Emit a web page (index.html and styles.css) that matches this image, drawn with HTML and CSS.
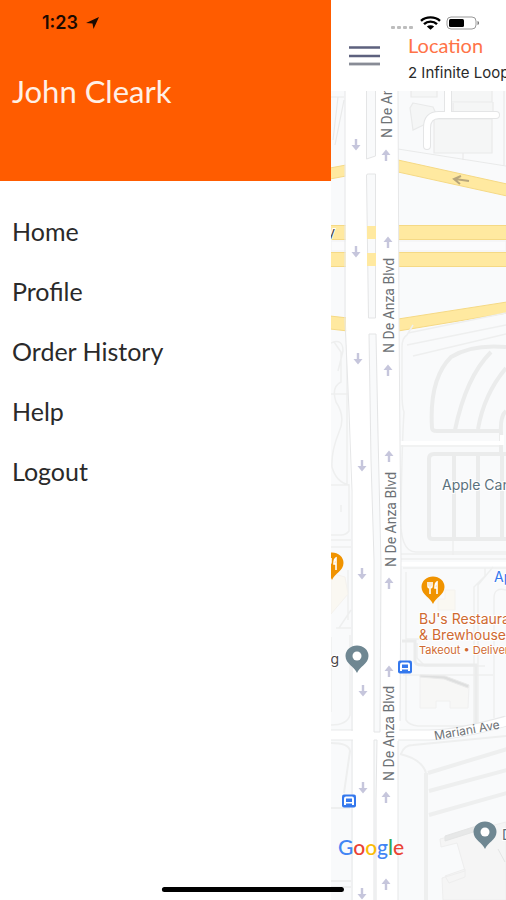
FILE: index.html
```html
<!DOCTYPE html>
<html lang="en">
<head>
<meta charset="utf-8">
<meta name="viewport" content="width=device-width, initial-scale=1">
<title>Menu</title>
<link rel="stylesheet" href="styles.css">
</head>
<body>
<div class="app">
  <aside class="drawer">
    <header class="profile">
      <div class="clock">
        <span>1:23</span>
        <svg width="13" height="12" viewBox="0 0 13 12" aria-hidden="true"><path d="M13 0 7.500 12 6.500 6.500 0 6Z"/></svg>
      </div>
      <h1 class="name">John Cleark</h1>
    </header>
    <nav class="menu">
      <a href="#home">Home</a>
      <a href="#profile">Profile</a>
      <a href="#orders">Order History</a>
      <a href="#help">Help</a>
      <a href="#logout">Logout</a>
    </nav>
  </aside>

  <main class="screen">
    <header class="topbar">
      <div class="status">
        <svg width="92" height="16" viewBox="0 0 92 16" aria-hidden="true">
          <g fill="#bdbdbd"><rect x="1" y="11" width="4" height="3" rx="1"/><rect x="7" y="11" width="4" height="3" rx="1"/><rect x="13" y="11" width="4" height="3" rx="1"/><rect x="19" y="11" width="4" height="3" rx="1"/></g>
          <g fill="none" stroke="#000" stroke-width="2.400"><path d="M31 5.800C36 1.200 45 1.200 50 5.800M34 9.200c3.500-3.500 9.500-3.500 13 0"/></g>
          <path d="M36.800 11.500c2.200-1.800 5.200-1.800 7.400 0l-3.700 3.200z"/>
          <rect x="57" y="2" width="29" height="12" rx="4" fill="#fff" stroke="#999"/>
          <rect x="59" y="4" width="15" height="8" rx="1.500"/>
          <path d="M87.500 6c2 .5 2 3.500 0 4z" fill="#777"/>
        </svg>
      </div>
      <div class="toolbar">
        <button class="burger" type="button" aria-label="Menu">
          <svg width="31" height="20" viewBox="0 0 31 20"><path d="M0 1.500h31M0 10h31" stroke="#5d617e" stroke-width="2.400"/><path d="M0 18h31" stroke="#888c96" stroke-width="2.800"/></svg>
        </button>
        <div class="place">
          <div class="place-title">Location</div>
          <div class="place-address">2 Infinite Loop</div>
        </div>
      </div>
    </header>

    <svg class="map" viewBox="331 91 175 809" preserveAspectRatio="xMinYMin slice" role="img" aria-label="Map">
      <defs>
        <path id="up" d="M-1.200 6V0H-4.500L0-5.500 4.500 0H1.200V6Z" fill="#c6c6dc"/>
        <path id="down" d="M-1.200-6V0H-4.500L0 5.500 4.500 0H1.200V-6Z" fill="#c6c6dc"/>
        <path id="pin" d="M0 15C-2 9-11.500 6-11.500-2a11.500 10.500 0 0 1 23 0C11.500 6 2 9 0 15Z"/>
        <g id="food"><use href="#pin" fill="#f09300"/><path d="M-5-7v4q0 2 2 2v6M-1-7v4q0 2-2 2M-3-7v5M4 5v-12q-2 1-2 6h2" fill="none" stroke="#fff" stroke-width="1.600"/></g>
        <g id="stop"><rect x="-7" y="-6.500" width="14" height="13" rx="2" fill="#3478ed"/><path d="M-5 4v-6.500q0-2 2-2h6q2 0 2 2v6.500z" fill="#fff"/><path d="M-3-2.500h6v3.500h-6zM-3 2.500h6v2h-6z" fill="#3478ed"/></g>
      </defs>

      <rect x="331" y="91" width="175" height="809" fill="#f9fafb"/>

      <!-- Buildings and paths north of the freeway -->
      <g fill="#f5f6f6" stroke="#e9eaea" stroke-width="1.200">
        <path d="M331 97h13M338 97l-5 43M344 100l-9 45" fill="none"/>
        <path d="M411 91v6h26v-6M413 103l20 4 5 11-25 12-3-22z"/>
        <path d="M450 91v11h42V91M453 103v9h40v-10"/>
        <path d="M434 119h58v34h-58z"/>
        <path d="M398 149 506 166M463 153v7M504 91v75" fill="none"/>
      </g>
      <path d="M427 146v-18q0-13 12-13h57M448 91v24" fill="none" stroke="#e4e5e6" stroke-width="8" stroke-linecap="round"/>
      <path d="M427 146v-18q0-13 12-13h57M448 91v24" fill="none" stroke="#fff" stroke-width="6" stroke-linecap="round"/>

      <!-- Freeway and ramps -->
      <g fill="#ffe9a0" stroke="#f5d985">
        <path d="M330 168 346 165v11l-16 3zM398 160l109 24v12L398 172z"/>
        <path d="M330 225.500h177v14H330zM330 252.500h177v14H330z"/>
        <path d="M330 316l18 2v13l-18-2zM398 319l109-17v11l-109 18z"/>
      </g>
      <path d="M331 241h175v10H331z" fill="#fbfbfc" stroke="#f1f1f2"/>

      <!-- Streets and car parks between the freeway and Mariani Ave -->
      <g fill="none" stroke="#eeefef" stroke-width="1.500">
        <path d="M413 325l-6 10q-5 3-5 12v45q0 15 2 20-2 30-3 100-2 40 15 40h90M408 333l98-20M407 345l99-20M413 356l93-22"/>
        <path d="M331 343q12-5 12 8l-5 20M334 342l7 10v30q-10 5-5 20 10 15 3 30-8 20-7 35 4 15 17 18M331 394h18M331 485h18v46q-3 4-8 4h-10M347 345v140M331 540h20M331 547h20M341 505v7"/>
        <path d="M401 442h100M401 446h100M401 554h105M401 559h105M403 568h103M406 572v67h75M453 540v15"/>
        <path d="M485 568v8l-11 11v142M493 567l-15 18v142M506 590q-12-3-12 8v120M406 640v80q3 5 12 6h55l33-9M417 643v15l8 8h60M403 675h90"/>
        <path d="M348 570v50M336 628h15M351 610l-12 18M331 637v75M331 725q16 0 19-10v-80"/>
      </g>
      <g fill="none" stroke="#ebecec" stroke-width="4">
        <path d="M506 347q-34-3-55 10-22 22-19 71 0 3 5 3h63M491 352q-25 25-36 78M506 368q-22 26-28 61M506 411q-6 5-5 22v20"/>
        <path d="M506 454h-72q-5 0-5 5v77q0 3 4 3h73M454 455v84M478 455v84M502 455v84"/>
        <path d="M402 641h13v20q0 4 7 4h54v62" stroke-width="3"/>
      </g>
      <path d="M398 443h104v-8M398 564h108" fill="none" stroke="#fff" stroke-width="4"/>
      <g fill="#f5f5f4" stroke="#eaeaea">
        <path d="M445 590h10v20h-17v-11h7zM331 573l14 4 3 17-17 20z" fill="#faf8f2" stroke="#f4f2ee"/>
        <path d="M420 676l25 1 24 9-1 22h-18v-7h-14v7h-16z" fill="#f7f7f6" stroke="#f0f0f0"/>
        <path d="M420 675l25 1 24 9-1 3-24-9-24-2z" fill="#dedfdf"/>
      </g>

      <!-- Mariani Ave and the campus below -->
      <path d="M331 735h98q27 0 77-14" fill="none" stroke="#e8e9ea" stroke-width="11"/>
      <path d="M330 735h99q27 0 78-14" fill="none" stroke="#fff" stroke-width="9"/>
      <g fill="none" stroke="#eeefef" stroke-width="4">
        <path d="M426 773v127M428 773l79-24M429 791l78-21M429 815l78-22"/>
        <path d="M401 754q3-9 12-9l93-9M400 754q22 5 26 19M331 743q18 0 19 8l-6 42M331 808h19M331 881h20M331 887h20" stroke-width="2"/>
      </g>
      <path d="M440 839l66-17v78h-63l-1-22 23-7-8-28-16 4zM445 876l20-7v8l-16 6z" fill="#f5f5f5" stroke="#eee"/>
      <path d="M445 836l41-13v5l-41 13zM498 849l7 13" fill="#e7e8e8" stroke="#e4e5e5"/>

      <!-- N De Anza Blvd carriageways -->
      <path d="M345 91h53l1 230 2 240-1 160-2 20v159h-45V560l-3-90-4-145z" fill="#fff"/>
      <path d="M345 91v230l4 90 3 80v240M352 740v160M398 91l1 230 2 240-1 160M398 741v159" fill="none" stroke="#e6e7e8"/>
      <g fill="#f9fafb" stroke="#e4e5e6">
        <path d="M366.500 90h9v66l-9 3zM366.500 175q0-1 2-1h7v144h-7zM369 334h7l2 100 3 130-1 168h-6V560l-3-100z"/>
        <path d="M374 740h3l-1 60v101h-2z"/>
      </g>
      <path d="M367 226h9v13h-9zM367 253h9v13h-9z" fill="#ffe9a0"/>

      <g>
        <use href="#down" x="356" y="145"/><use href="#down" x="356" y="252"/><use href="#down" x="358" y="359"/><use href="#down" x="362" y="466"/><use href="#down" x="362" y="574"/><use href="#down" x="363" y="691"/><use href="#down" x="363" y="788"/><use href="#down" x="362" y="894"/>
        <use href="#up" x="386" y="155"/><use href="#up" x="388" y="242"/><use href="#up" x="388" y="370"/><use href="#up" x="389" y="456"/><use href="#up" x="389" y="583"/><use href="#up" x="389" y="671"/><use href="#up" x="386" y="797"/><use href="#up" x="386" y="884"/>
      </g>
      <path d="M469 181l-14-2M461 176l-7 3 6 5" fill="none" stroke="#b8a67b" stroke-width="2"/>

      <g class="road">
        <text transform="translate(392 138) rotate(-90)">N De Anza Blvd</text>
        <text transform="translate(394 353) rotate(-90)">N De Anza Blvd</text>
        <text transform="translate(396 567) rotate(-90)">N De Anza Blvd</text>
        <text transform="translate(394 781) rotate(-90)">N De Anza Blvd</text>
        <text class="street" transform="translate(435 740) rotate(-10)">Mariani Ave</text>
      </g>

      <use href="#food" x="332" y="565"/>
      <use href="#food" x="433" y="589"/>
      <g fill="#6f8792"><use href="#pin" x="357" y="658"/><use href="#pin" x="485" y="834"/></g>
      <circle cx="357" cy="656" r="4.500" fill="#fff"/><circle cx="485" cy="832" r="4.500" fill="#fff"/>
      <use href="#stop" x="405" y="667"/><use href="#stop" x="349" y="801"/>

      <text class="label edge" x="335" y="237">y</text>
      <text class="label" x="442" y="490">Apple Campus</text>
      <text class="label transit" x="494" y="582">Apple</text>
      <text class="label food" x="419" y="624">BJ's Restaurant</text>
      <text class="label food" x="419" y="640">&amp; Brewhouse</text>
      <text class="label note" x="419" y="654">Takeout • Delivery</text>
      <text class="label edge" x="339" y="664">g</text>
      <text class="label" x="502" y="840">D</text>
      <text class="google" x="338" y="855"><tspan fill="#4285f4">G</tspan><tspan fill="#ea4335">o</tspan><tspan fill="#fbbc05">o</tspan><tspan fill="#4285f4">g</tspan><tspan fill="#34a853">l</tspan><tspan fill="#ea4335">e</tspan></text>
    </svg>
  </main>
  <div class="home-indicator"></div>
</div>
</body>
</html>
```
FILE: styles.css
```css
* {
  box-sizing: border-box;
}

body {
  margin: 0;
  background: #fff;
  color: #2a2a2a;
  font-family: Lato, "Liberation Sans", sans-serif;
}

.app {
  position: relative;
  display: grid;
  grid-template-columns: 331fr 175fr;
  min-height: 100vh;
  overflow: hidden;
}

.drawer {
  background: #fff;
}

.profile {
  padding: 12px 12px 72px;
  background: #ff5c00;
}

.clock {
  display: flex;
  align-items: center;
  gap: 8px;
  padding-left: 30px;
  color: #1c0a00;
  font: 600 18px/22px Inter, sans-serif;
}

.clock svg {
  fill: #1c0a00;
}

.name {
  margin: 39px 0 0;
  color: #fff0e6;
  font-size: 31px;
  font-weight: 400;
  line-height: 36px;
}

.menu {
  display: flex;
  flex-direction: column;
  gap: 30px;
  padding: 35px 12px;
}

.menu a {
  color: #2a2a2a;
  font-size: 25px;
  line-height: 30px;
  text-decoration: none;
}

.screen {
  display: flex;
  flex-direction: column;
  min-width: 0;
  overflow: hidden;
}

.topbar {
  height: 91px;
  padding-top: 15px;
  background: #fff;
}

.status {
  display: flex;
  justify-content: flex-end;
  padding-right: 24px;
}

.status svg {
  display: block;
}

.toolbar {
  display: flex;
  gap: 28px;
  padding-left: 18px;
  white-space: nowrap;
}

.burger {
  align-self: flex-start;
  margin: 15px 0 0;
  padding: 0;
  border: 0;
  background: none;
}

.burger svg {
  display: block;
}

.place-title {
  margin-top: 3px;
  color: #ff7347;
  font-size: 20px;
  line-height: 22px;
}

.place-address {
  margin-top: 7px;
  font: 15px/20px Inter, sans-serif;
}

.map {
  display: block;
  flex: 1;
  width: 100%;
  min-height: 0;
}

.road {
  fill: #6d7175;
  font: 14px Roboto, sans-serif;
}

.road .street {
  font: 12px Inter, sans-serif;
}

.label {
  fill: #5a717c;
  stroke: #fff;
  stroke-width: 2px;
  paint-order: stroke;
  font: 14px Inter, sans-serif;
}

.label.edge {
  fill: #4a4547;
  text-anchor: end;
}

.label.transit {
  fill: #3478ed;
}

.label.food {
  fill: #cf6a32;
}

.label.note {
  fill: #cf6a32;
  font-size: 11px;
}

.google {
  font: 500 21px Lato, sans-serif;
}

.home-indicator {
  position: absolute;
  bottom: 8px;
  left: 50%;
  width: 36%;
  height: 5px;
  border-radius: 3px;
  background: #000;
  transform: translateX(-50%);
}
```
